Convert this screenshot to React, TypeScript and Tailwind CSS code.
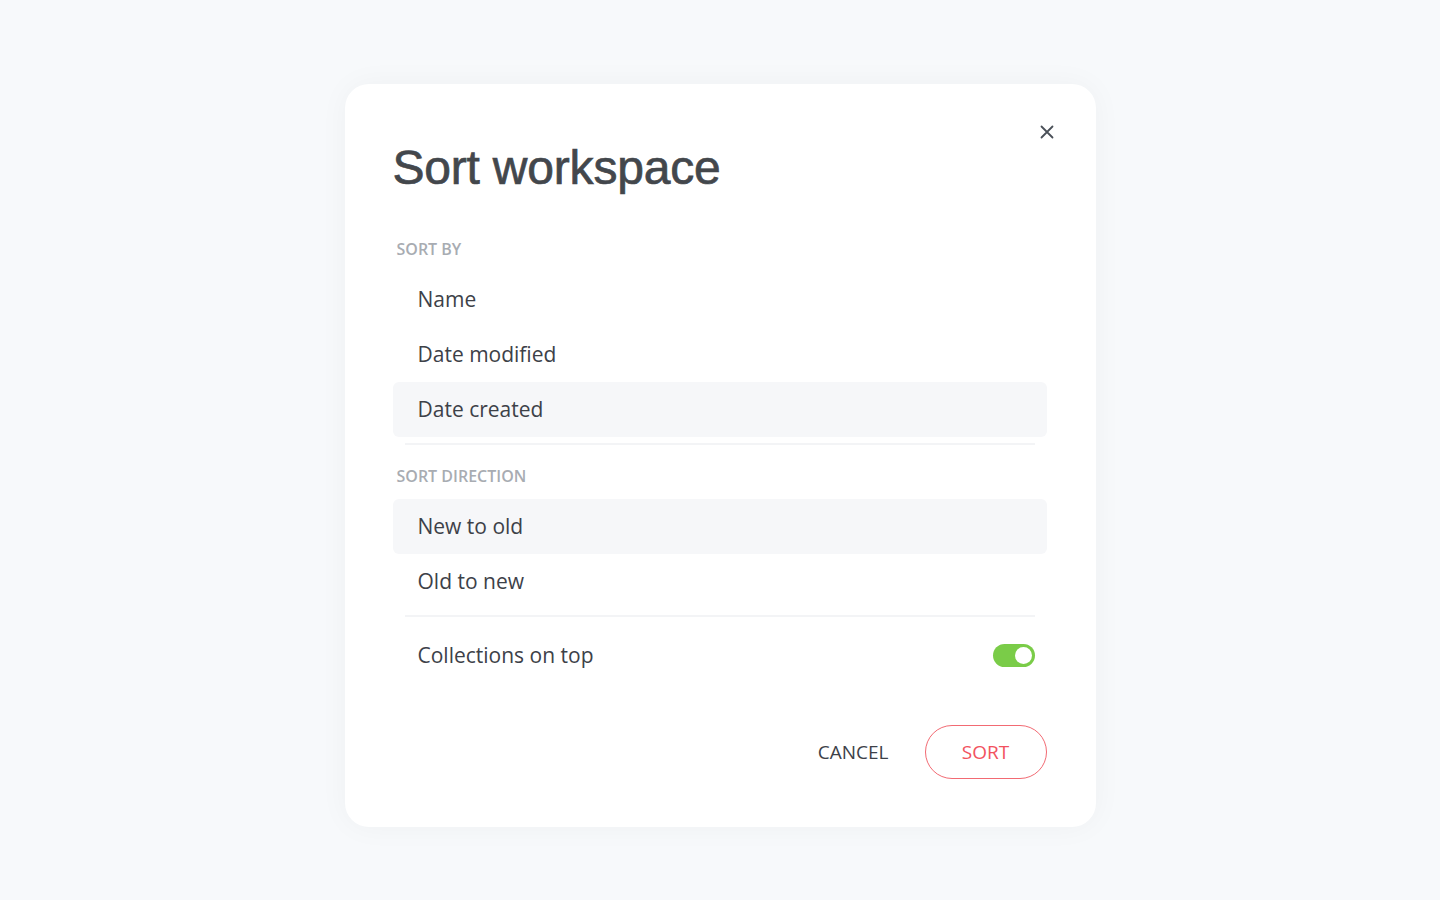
import { useState } from 'react'

type Option = {
    label: string
}

const sortBy: Option[] = [{ label: 'Name' }, { label: 'Date modified' }, { label: 'Date created' }]
const sortDirection: Option[] = [{ label: 'New to old' }, { label: 'Old to new' }]

function SectionLabel({ children }: { children: string }) {
    return (
        <p className="px-[4px] text-[16px] font-semibold leading-6 uppercase text-[#a8acb2]">{children}</p>
    )
}

function OptionRow({ label, active, onClick }: { label: string; active: boolean; onClick: () => void }) {
    return (
        <button
            onClick={onClick}
            className={`flex items-center w-full h-[55px] pl-[25px] text-left text-[21px] text-[#3d4148] rounded-md ${
                active ? 'bg-[#f6f7f9]' : 'bg-transparent'
            }`}
        >
            {label}
        </button>
    )
}

export default function App() {
    const [by, setBy] = useState('Date created')
    const [direction, setDirection] = useState('New to old')
    const [collectionsOnTop, setCollectionsOnTop] = useState(true)

    return (
        <div
            className="flex justify-center w-full min-h-[900px] pt-[84px] bg-[#f7f9fb]"
            style={{ fontFamily: '"Open Sans", "Noto Sans", sans-serif' }}
        >
            <div className="relative flex flex-col w-[751px] h-[743px] pl-[48px] pr-[49px] pt-[56px] pb-[48px] bg-white rounded-[24px] shadow-[0_0_30px_rgba(30,40,60,0.04)]">
                <button className="absolute top-[34px] right-[35px] flex items-center justify-center w-7 h-7 text-[#4a5058]">
                    <svg className="w-[14px] h-[14px]" viewBox="0 0 14 14" fill="none" stroke="currentColor" strokeWidth="1.8" strokeLinecap="round">
                        <path d="M1.5 1.5l11 11M12.5 1.5l-11 11" />
                    </svg>
                </button>

                <h1
                    className="text-[48px] leading-[56px] font-normal tracking-[-0.2px] text-[#43474c] [-webkit-text-stroke:0.7px_#43474c]"
                    style={{ fontFamily: '"Liberation Sans", Arial, sans-serif' }}
                >
                    Sort workspace
                </h1>

                <div className="mt-[41px]">
                    <SectionLabel>Sort by</SectionLabel>
                    <div className="mt-[11px]">
                        {sortBy.map((o) => (
                            <OptionRow key={o.label} label={o.label} active={by === o.label} onClick={() => setBy(o.label)} />
                        ))}
                    </div>
                    <div className="mx-3 mt-[6px] h-[2px] bg-[#f3f4f6]" />
                </div>

                <div className="mt-[19px]">
                    <SectionLabel>Sort direction</SectionLabel>
                    <div className="mt-[11px]">
                        {sortDirection.map((o) => (
                            <OptionRow
                                key={o.label}
                                label={o.label}
                                active={direction === o.label}
                                onClick={() => setDirection(o.label)}
                            />
                        ))}
                    </div>
                    <div className="mx-3 mt-[6px] h-[2px] bg-[#f3f4f6]" />
                </div>

                <div className="flex items-center justify-between h-[55px] mt-[11px] pl-[25px] pr-3">
                    <span className="text-[21px] text-[#3d4148]">Collections on top</span>
                    <button
                        onClick={() => setCollectionsOnTop(!collectionsOnTop)}
                        className={`flex items-center w-[42px] h-[23px] px-[3px] rounded-full ${
                            collectionsOnTop ? 'justify-end bg-[#7acc48]' : 'justify-start bg-[#d5d8dc]'
                        }`}
                    >
                        <span className="block w-[17px] h-[17px] bg-white rounded-full" />
                    </button>
                </div>

                <div className="flex items-center justify-end gap-[36px] mt-auto">
                    <button className="text-[19px] uppercase text-[#3d4148]">Cancel</button>
                    <button className="flex items-center justify-center w-[122px] h-[54px] text-[19px] uppercase text-[#f2525e] border border-[#f26a73] rounded-full">
                        Sort
                    </button>
                </div>
            </div>
        </div>
    )
}
